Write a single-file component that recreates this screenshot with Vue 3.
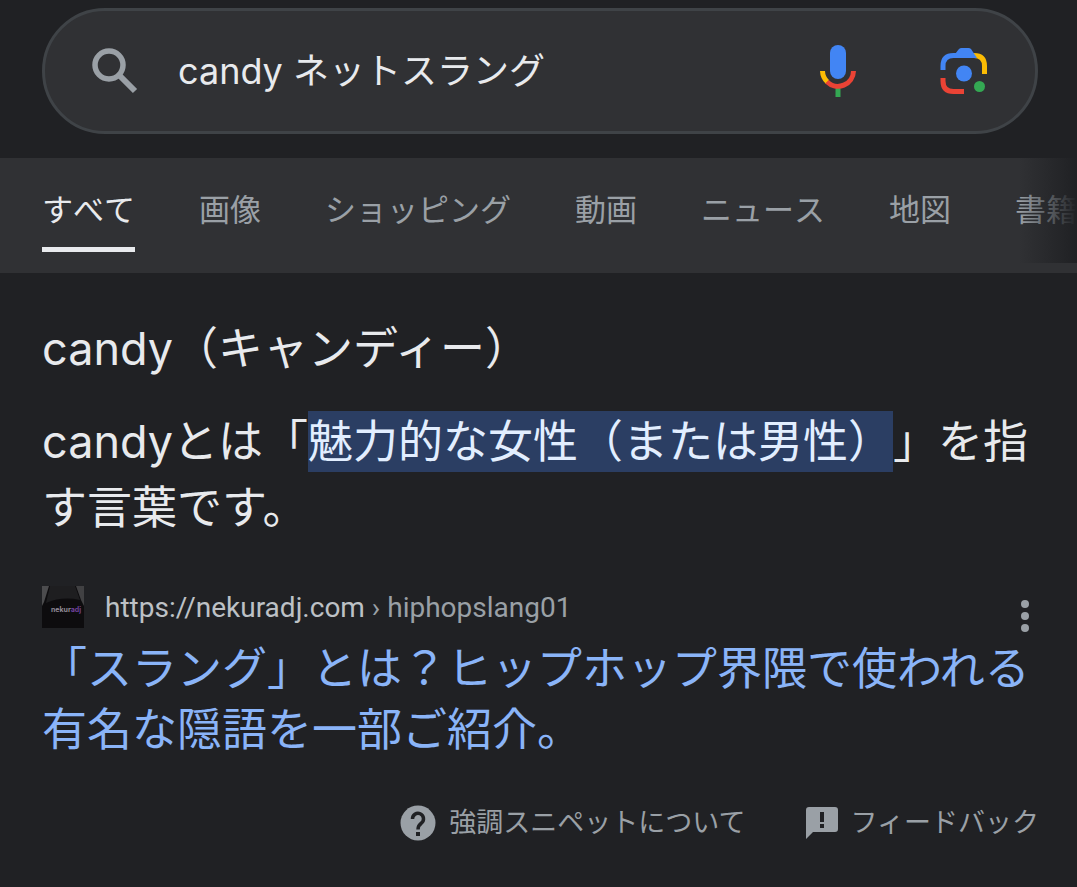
<script setup>
import { ref } from 'vue'

const query = ref('candy ネットスラング')
const tabs = ['すべて', '画像', 'ショッピング', '動画', 'ニュース', '地図', '書籍']
const active = ref(0)
</script>

<template>
  <div class="page">
    <header class="top">
      <form class="search" role="search" @submit.prevent>
        <button class="icon-btn" type="submit" aria-label="検索">
          <svg width="46" height="46" viewBox="0 0 46 46" fill="none" stroke="#9aa0a6">
            <circle cx="17" cy="17" r="14" stroke-width="5.5" />
            <path d="M27 27L43 43" stroke-width="6" />
          </svg>
        </button>
        <input v-model="query" class="query" type="text" aria-label="検索キーワード" />
        <button class="icon-btn mic" type="button" aria-label="音声検索">
          <svg width="36" height="52" viewBox="0 0 36 52" fill="none" stroke-width="5">
            <rect x="10" y="0" width="16" height="34" rx="8" fill="#4285f4" />
            <path d="M15.500 43h5v9h-5z" fill="#34a853" />
            <path d="M2.500 26A15.500 15.500 0 0 0 7.500 37" stroke="#fbbc04" />
            <path d="M7 36.700A15.500 15.500 0 0 0 33.500 26" stroke="#ea4335" />
          </svg>
        </button>
        <button class="icon-btn" type="button" aria-label="画像で検索">
          <svg width="48" height="48" viewBox="0 0 48 48" fill="none" stroke-width="5">
            <path d="M32 8.500H34Q44.500 8.500 44.500 19V27" stroke="#fbbc04" />
            <path d="M3 23V19Q3 8.500 13.500 8.500H32" stroke="#4285f4" />
            <path d="M15 7L19 2Q20 1 21.500 1H28.500Q30 1 31 2L37 11H15z" fill="#4285f4" />
            <path d="M3 31V34Q3 44.500 13.500 44.500H24" stroke="#ea4335" />
            <circle cx="24" cy="26.500" r="8" fill="#4285f4" />
            <circle cx="39.500" cy="39.500" r="5.500" fill="#34a853" />
          </svg>
        </button>
      </form>
    </header>

    <nav class="tabs" aria-label="検索の種類">
      <a
        v-for="(tab, i) in tabs"
        :key="tab"
        href="#"
        class="tab"
        :class="{ active: i === active }"
        @click.prevent="active = i"
      >{{ tab }}</a>
    </nav>

    <main class="result">
      <h2 class="heading">candy（キャンディー）</h2>
      <p class="answer">candyとは「<mark>魅力的な女性（または男性）</mark>」を指す言葉です。</p>

      <div class="source">
        <svg class="favicon" width="42" height="42" viewBox="0 0 42 42" aria-hidden="true">
          <rect width="42" height="42" fill="#0d0c0e" />
          <path d="M0 0H7L2 16L0 20z" fill="#4c4c4e" />
          <path d="M34 0H42V20L39 14z" fill="#414143" />
          <path d="M8 0H33L38 14Q20 10 4 17z" fill="#1e1e20" />
          <text x="9" y="26" font-size="7" font-weight="700" fill="#918a96">nekur<tspan fill="#70429b">adj</tspan></text>
        </svg>
        <cite class="url">https://nekuradj.com<span class="path"> › hiphopslang01</span></cite>
        <button class="more" type="button" aria-label="この結果について">
          <svg width="10" height="34" viewBox="0 0 10 34" fill="#9aa0a6">
            <circle cx="5" cy="5" r="4" />
            <circle cx="5" cy="17" r="4" />
            <circle cx="5" cy="29" r="4" />
          </svg>
        </button>
      </div>
      <h3 class="title">
        <a href="#">「スラング」とは？ヒップホップ界隈で使われる有名な隠語を一部ご紹介。</a>
      </h3>

      <footer class="foot">
        <a href="#">
          <svg width="36" height="36" viewBox="0 0 36 36">
            <circle cx="18" cy="18" r="17.500" fill="#9aa0a6" />
            <path d="M12.500 14A5.500 5.500 0 1 1 21.500 18Q18 20.500 18 24.500" fill="none" stroke="#202124" stroke-width="3.500" />
            <path d="M16 27h4v4h-4z" fill="#202124" />
          </svg>
          強調スニペットについて
        </a>
        <a href="#">
          <svg width="32" height="32" viewBox="0 0 32 32">
            <path d="M3 0H29Q32 0 32 3V22Q32 25 29 25H7L0 32V3Q0 0 3 0z" fill="#9aa0a6" />
            <path d="M14 5h4v10h-4zM14 17h4v4h-4z" fill="#202124" />
          </svg>
          フィードバック
        </a>
      </footer>
    </main>
  </div>
</template>

<style>
body {
  margin: 0;
  background: #202124;
}
</style>

<style scoped>
.page {
  min-height: 100vh;
  background: #202124;
  color: #e8eaed;
  font-family: Inter, "Noto Sans CJK JP", sans-serif;
  text-spacing-trim: space-all;
  overflow: hidden;
}
.page a {
  text-decoration: none;
}
.page svg {
  display: block;
  flex: none;
}
.top {
  padding: 8px 39px 24px 42px;
}
.search {
  display: flex;
  align-items: center;
  box-sizing: border-box;
  height: 126px;
  padding: 0 47px;
  border: 3px solid #3f4347;
  border-radius: 63px;
  background: #303134;
}
.icon-btn,
.more {
  flex: none;
  padding: 0;
  border: 0;
  background: none;
}
.query {
  flex: 1;
  min-width: 0;
  height: 60px;
  margin: 0 24px 0 40px;
  padding: 0;
  border: 0;
  outline: 0;
  background: none;
  color: #e8eaed;
  font: inherit;
  font-size: 36px;
  line-height: 60px;
}
.mic {
  margin-right: 84px;
}
.tabs {
  position: relative;
  display: flex;
  gap: 64px;
  height: 94px;
  padding: 0 0 21px 42px;
  background: #303134;
  overflow: hidden;
}
.tabs::after {
  content: "";
  position: absolute;
  top: 0;
  right: 0;
  width: 58px;
  height: 105px;
  background: linear-gradient(to right, #20212400, #202124);
}
.tab {
  flex: none;
  box-sizing: border-box;
  height: 94px;
  border-bottom: 5px solid transparent;
  color: #9aa0a6;
  font-size: 31px;
  font-kerning: none;
  line-height: 104px;
  white-space: nowrap;
}
.tab.active {
  border-color: #e8eaed;
  color: #e8eaed;
}
.result {
  padding: 46px 38px 0 42px;
}
.heading,
.answer {
  margin: 0 0 30px;
  font-size: 45px;
  font-weight: 400;
  line-height: 60px;
}
.answer {
  margin-bottom: 45px;
  line-height: 66px;
}
.answer mark {
  padding: 3px 0;
  background: #2b3e63;
  color: #e2eeff;
}
.source {
  display: flex;
  align-items: center;
  height: 42px;
  margin-bottom: 10px;
}
.url {
  flex: 1;
  margin-left: 21px;
  color: #bdc1c6;
  font-family: Roboto, sans-serif;
  font-size: 28px;
  font-style: normal;
}
.path {
  color: #9aa0a6;
}
.more {
  margin: 18px 9px 0 0;
}
.title {
  margin: 0 0 42px;
  font-size: 45px;
  font-weight: 400;
  line-height: 61px;
}
.title a {
  color: #8ab4f8;
}
.foot {
  display: flex;
  justify-content: flex-end;
  gap: 60px;
  font-size: 27px;
  line-height: 42px;
}
.foot a {
  display: flex;
  align-items: center;
  gap: 13px;
  color: #9aa0a6;
}
</style>
